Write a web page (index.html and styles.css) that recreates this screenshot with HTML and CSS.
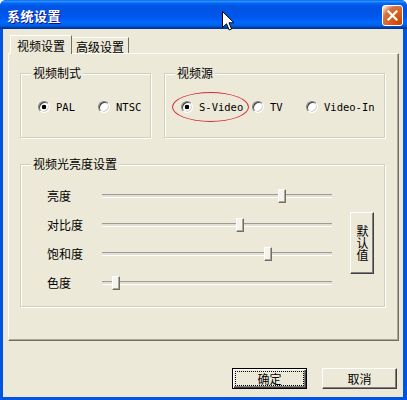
FILE: index.html
```html
<!DOCTYPE html>
<html lang="zh-CN">

<head>
  <meta charset="UTF-8">
  <title>系统设置</title>
  <link rel="stylesheet" href="styles.css">
</head>

<body>
  <div class="window">
    <div class="titleBar">
      <span class="titleText">系统设置</span>
      <button class="closeButton" title="关闭">
        <svg width="11" height="11" viewBox="0 0 11 11">
          <path d="M1.5 1.5 L9.5 9.5 M9.5 1.5 L1.5 9.5" stroke="#fff" stroke-width="2.2" stroke-linecap="square" />
        </svg>
      </button>
    </div>

    <div class="client">
      <div class="tabStrip">
        <div class="tab active">视频设置</div>
        <div class="tab">高级设置</div>
      </div>

      <div class="tabPanel">
        <div class="groupRow">
          <fieldset class="groupBox standardGroup">
            <legend>视频制式</legend>
            <div class="radioRow">
              <label class="radioOpt optPal"><span class="radio checked"></span>PAL</label>
              <label class="radioOpt"><span class="radio"></span>NTSC</label>
            </div>
          </fieldset>
          <fieldset class="groupBox sourceGroup">
            <legend>视频源</legend>
            <div class="radioRow">
              <label class="radioOpt optSvideo"><span class="radio checked"></span>S-Video<span class="markCircle"></span></label>
              <label class="radioOpt optTv"><span class="radio"></span>TV</label>
              <label class="radioOpt"><span class="radio"></span>Video-In</label>
            </div>
          </fieldset>
        </div>

        <fieldset class="groupBox lightGroup">
          <legend>视频光亮度设置</legend>
          <div class="lightBody">
            <div class="sliderList">
              <div class="sliderRow">
                <span class="sliderLabel">亮度</span>
                <div class="track"><span class="thumb" style="left: 176px"></span></div>
              </div>
              <div class="sliderRow">
                <span class="sliderLabel">对比度</span>
                <div class="track"><span class="thumb" style="left: 134px"></span></div>
              </div>
              <div class="sliderRow">
                <span class="sliderLabel">饱和度</span>
                <div class="track"><span class="thumb" style="left: 162px"></span></div>
              </div>
              <div class="sliderRow">
                <span class="sliderLabel">色度</span>
                <div class="track"><span class="thumb" style="left: 10px"></span></div>
              </div>
            </div>
            <button class="winButton resetButton">默认值</button>
          </div>
        </fieldset>
      </div>

      <div class="dialogButtons">
        <button class="winButton okButton"><span class="focusRing">确定</span></button>
        <button class="winButton">取消</button>
      </div>
    </div>

    <!-- mouse pointer over the title bar -->
    <svg class="cursor" width="13" height="21" viewBox="0 0 13 21">
      <path d="M0.5 0.5 L0.5 16.5 L4.5 12.8 L7.2 19 L9.6 18 L7 11.8 L12 11.8 Z" fill="#fff" stroke="#000" stroke-width="1" />
    </svg>
  </div>
</body>

</html>
```

FILE: styles.css
```css
* {
  box-sizing: border-box;
}

body {
  margin: 0;
  background: #fff;
  font-family: "Noto Sans CJK SC", sans-serif;
  font-size: 12px;
  color: #000;
}

.window {
  position: relative;
  width: 407px;
  height: 400px;
  display: flex;
  flex-direction: column;
  background: #0054e3;
  border-radius: 6px 6px 0 0;
  overflow: hidden;
}

/* Title bar */
.titleBar {
  height: 29px;
  flex-shrink: 0;
  display: flex;
  align-items: center;
  justify-content: space-between;
  padding: 1px 4px 0 7px;
  background: linear-gradient(to bottom, #0058ee 0%, #3593ff 4%, #288eff 6%, #127dff 8%, #036ffc 10%, #0262ee 14%, #0057e5 20%, #0054e3 24%, #0055eb 56%, #005bf5 66%, #026afe 76%, #0062ef 86%, #0052d6 92%, #0040ab 94%, #003092 100%);
}

.titleText {
  color: #fff;
  font-weight: bold;
  font-size: 13px;
  letter-spacing: 0.5px;
  text-shadow: 1px 1px #0f1089;
}

.closeButton {
  width: 21px;
  height: 21px;
  padding: 0;
  display: flex;
  align-items: center;
  justify-content: center;
  border: 1px solid #fff;
  border-radius: 3px;
  background: radial-gradient(circle at 90% 90%, #cc4600 0, #dc6527 55%, #cd7546 70%, #ffccb2 90%, #fff 100%);
}

/* Client area */
.client {
  flex: 1;
  display: flex;
  flex-direction: column;
  margin: 0 4px 3px 3px;
  padding-top: 6px;
  background: #ece9d8;
}

.tabStrip {
  height: 18px;
  display: flex;
  align-items: flex-end;
  padding-left: 7px;
}

.tab {
  height: 16px;
  padding: 2px 4px 0;
  line-height: 14px;
  border: 1px solid;
  border-color: #fff #716f64 transparent #fff;
  border-bottom: none;
  background: #ece9d8;
}

.tab.active {
  position: relative;
  z-index: 1;
  width: 62px;
  height: 19px;
  margin-bottom: -1px;
  margin-right: -1px;
  padding: 3px 0 0 6px;
}

.tabPanel {
  height: 288px;
  margin: 0 4px 0 5px;
  padding: 12px 0 0 11px;
  border: 1px solid;
  border-color: #fff #716f64 #716f64 #fff;
  box-shadow: inset -1px -1px 0 #aca899;
}

/* Group boxes */
.groupRow {
  display: flex;
  gap: 13px;
}

.groupBox {
  margin: 0;
  padding: 0;
  min-width: 0;
  border: 1px solid #d0d0bf;
  box-shadow: inset 1px 1px 0 #fff, 1px 1px 0 #fff;
}

.groupBox legend {
  margin-left: 10px;
  padding: 0 2px;
  line-height: 14px;
  background: #ece9d8;
}

.standardGroup {
  width: 131px;
  height: 72px;
}

.sourceGroup {
  width: 221px;
  height: 72px;
}

.radioRow {
  display: flex;
  margin-top: 20px;
  padding-left: 17px;
}

.sourceGroup .radioRow {
  padding-left: 16px;
}

.radioOpt {
  position: relative;
  display: flex;
  align-items: center;
  gap: 6px;
  height: 14px;
  font-family: "DejaVu Sans Mono", monospace;
  font-size: 10.5px;
}

.optPal {
  width: 60px;
}

.optSvideo {
  width: 71px;
}

.optTv {
  width: 54px;
}

.radio {
  width: 12px;
  height: 12px;
  border-radius: 50%;
  border: 1px solid;
  border-color: #808080 #fff #fff #808080;
  box-shadow: inset 1px 1px 0 #404040, inset -1px -1px 0 #d4d0c8;
  background: #fff;
}

.radio.checked {
  background: radial-gradient(circle, #000 0 2px, #fff 2.6px);
}

/* red marker drawn around the S-Video choice */
.markCircle {
  position: absolute;
  left: -9px;
  top: -8px;
  width: 77px;
  height: 30px;
  border: 1.3px solid #d42b36;
  border-radius: 50%;
}

.lightGroup {
  width: 365px;
  height: 150px;
  margin-top: 19px;
}

.lightBody {
  display: flex;
  align-items: flex-start;
  padding: 10px 0 0 26px;
}

.sliderRow {
  height: 29px;
  display: flex;
  align-items: center;
}

.sliderLabel {
  width: 55px;
  line-height: 14px;
}

.track {
  position: relative;
  width: 230px;
  height: 4px;
  border-top: 1px solid #9d9c99;
  border-bottom: 1px solid #fff;
  background: #e2dfd2;
}

.thumb {
  position: absolute;
  top: -6px;
  width: 8px;
  height: 14px;
  border: 1px solid;
  border-color: #fff #716f64 #716f64 #fff;
  box-shadow: inset -1px -1px 0 #aca899;
  background: #f4f3ee;
}

/* Buttons */
.winButton {
  padding: 0;
  font-family: "Noto Sans CJK SC", sans-serif;
  font-size: 12px;
  color: #000;
  background: #ece9d8;
  border: 1px solid;
  border-color: #fff #404040 #404040 #fff;
  box-shadow: inset -1px -1px 0 #808080;
}

.resetButton {
  width: 24px;
  height: 62px;
  margin: 31px 0 0 18px;
  line-height: 12px;
  writing-mode: vertical-rl;
  text-orientation: upright;
}

.dialogButtons {
  display: flex;
  justify-content: flex-end;
  gap: 15px;
  padding: 27px 6px 0 0;
}

.dialogButtons .winButton {
  width: 75px;
  height: 21px;
  line-height: 14px;
}

.okButton {
  display: flex;
  padding: 2px;
  border-color: #000;
  box-shadow: inset 1px 1px 0 #fff, inset -1px -1px 0 #404040, inset -2px -2px 0 #808080;
}

.focusRing {
  flex: 1;
  border: 1px dotted #000;
  line-height: 13px;
}

.cursor {
  position: absolute;
  left: 222px;
  top: 11px;
}
```
